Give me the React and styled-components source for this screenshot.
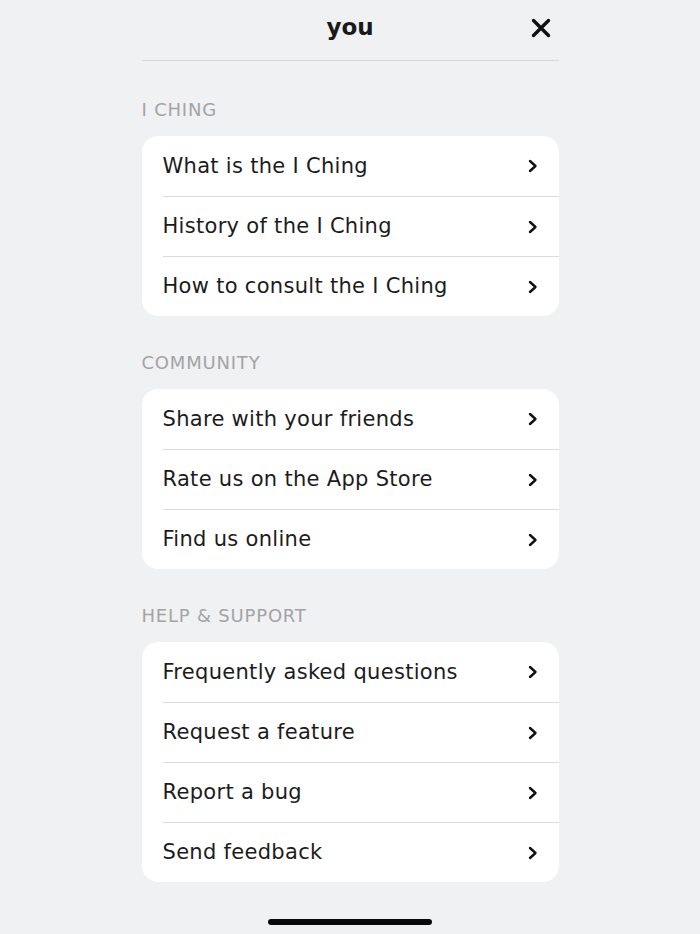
import React from "react";
import styled, { createGlobalStyle } from "styled-components";

const GlobalStyle = createGlobalStyle`
  html, body {
    margin: 0;
    padding: 0;
    background: #f0f1f3;
  }
  body {
    font-family: "DejaVu Sans", "Open Sans", sans-serif;
    color: #1a1a1a;
  }
`;

const Page = styled.div`
  width: 700px;
  height: 934px;
  display: flex;
  flex-direction: column;
  align-items: center;
  background: #f0f1f3;
`;

const Column = styled.div`
  width: 417px;
  display: flex;
  flex-direction: column;
`;

const Header = styled.div`
  height: 61px;
  box-sizing: border-box;
  display: flex;
  align-items: center;
  justify-content: center;
  position: relative;
  border-bottom: 1px solid #d8d8db;
  margin-bottom: 38px;
`;

const Title = styled.div`
  font-size: 23px;
  font-weight: 700;
  margin-top: -6px;
`;

const Close = styled.button`
  position: absolute;
  right: 6px;
  top: 16px;
  width: 24px;
  height: 24px;
  padding: 0;
  border: none;
  background: none;
  display: flex;
  align-items: center;
  justify-content: center;
`;

const Label = styled.div`
  font-size: 18px;
  letter-spacing: 0.8px;
  color: #a3a3a6;
  text-transform: uppercase;
  line-height: 22px;
  margin-bottom: 15px;
`;

const Card = styled.div`
  background: #ffffff;
  border-radius: 16px;
  overflow: hidden;
  margin-bottom: 36px;
`;

const Row = styled.div`
  height: 60px;
  padding-left: 21px;
  display: flex;
  align-items: center;
`;

const RowInner = styled.div`
  flex: 1;
  height: 100%;
  display: flex;
  align-items: center;
  justify-content: space-between;
  padding-right: 20px;
  border-top: ${({ $first }) => ($first ? "none" : "1px solid #dcdcde")};
  box-sizing: border-box;
`;

const RowText = styled.span`
  font-size: 21px;
  letter-spacing: 0.3px;
  color: #1c1c1c;
  margin-top: -1px;
`;

const HomeBar = styled.div`
  width: 164px;
  height: 6px;
  border-radius: 3px;
  background: #0a0a0a;
  margin-top: auto;
  margin-bottom: 9px;
`;

const Chevron = () => (
  <svg width="12" height="14" viewBox="0 0 12 14">
    <path d="M3 2 L8.5 7 L3 12" fill="none" stroke="#111" strokeWidth="2.4" strokeLinecap="round" strokeLinejoin="round" />
  </svg>
);

const sections = [
  { label: "I Ching", items: ["What is the I Ching", "History of the I Ching", "How to consult the I Ching"] },
  { label: "Community", items: ["Share with your friends", "Rate us on the App Store", "Find us online"] },
  {
    label: "Help & Support",
    items: ["Frequently asked questions", "Request a feature", "Report a bug", "Send feedback"],
  },
];

const App = () => {
  return (
    <Page>
      <GlobalStyle />
      <Column>
        <Header>
          <Title>you</Title>
          <Close aria-label="close">
            <svg width="20" height="20" viewBox="0 0 20 20">
              <path d="M2.5 2.5 L17.5 17.5 M17.5 2.5 L2.5 17.5" stroke="#111" strokeWidth="3.4" strokeLinecap="round" />
            </svg>
          </Close>
        </Header>
        {sections.map((s) => (
          <React.Fragment key={s.label}>
            <Label>{s.label}</Label>
            <Card>
              {s.items.map((item, i) => (
                <Row key={item}>
                  <RowInner $first={i === 0}>
                    <RowText>{item}</RowText>
                    <Chevron />
                  </RowInner>
                </Row>
              ))}
            </Card>
          </React.Fragment>
        ))}
      </Column>
      <HomeBar />
    </Page>
  );
};

export default App;
